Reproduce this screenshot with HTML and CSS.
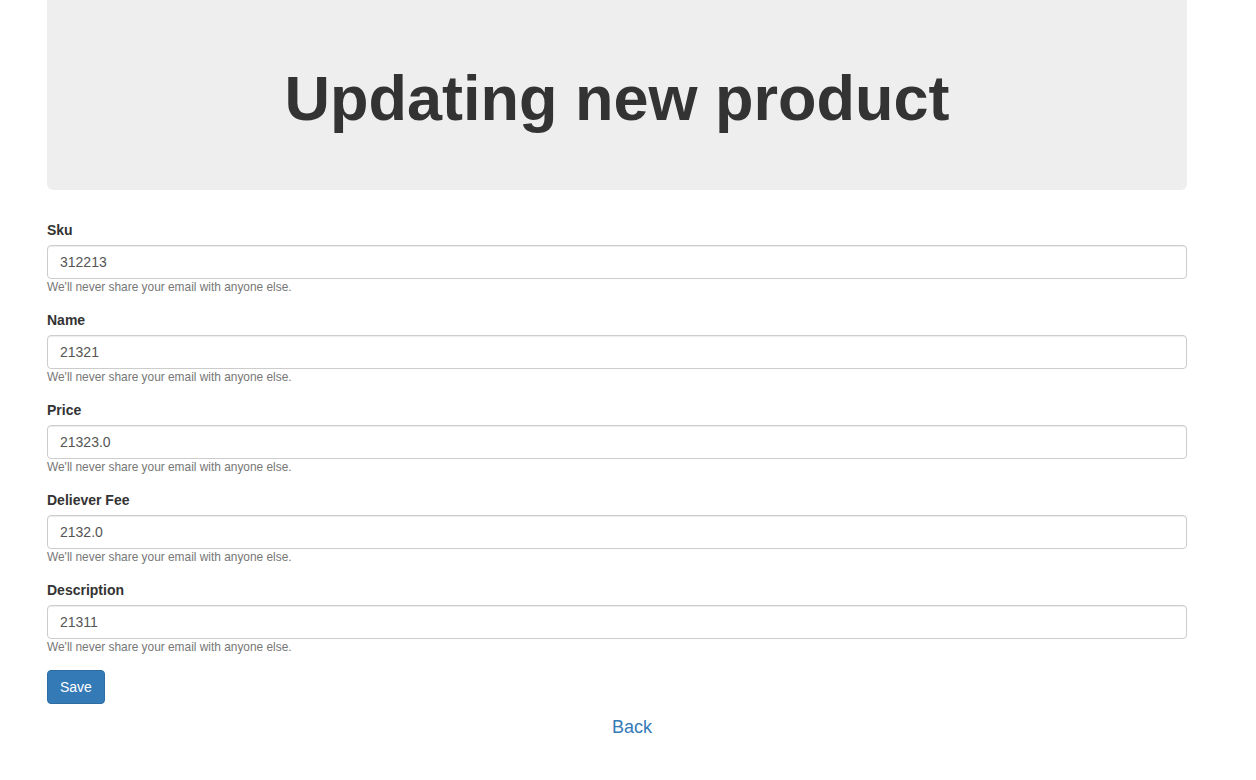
FILE: index.html
```html
<!DOCTYPE html>
<html lang="en">
<head>
<meta charset="utf-8">
<title>Updating new product</title>
<link rel="stylesheet" href="styles.css">
</head>
<body>
<div class="page">
  <div class="jumbotron">
    <h1>Updating new product</h1>
  </div>
  <form class="product-form">
    <div class="form-group">
      <label for="sku">Sku</label>
      <input id="sku" class="form-control" type="text" value="312213">
      <small class="help">We'll never share your email with anyone else.</small>
    </div>
    <div class="form-group">
      <label for="name">Name</label>
      <input id="name" class="form-control" type="text" value="21321">
      <small class="help">We'll never share your email with anyone else.</small>
    </div>
    <div class="form-group">
      <label for="price">Price</label>
      <input id="price" class="form-control" type="text" value="21323.0">
      <small class="help">We'll never share your email with anyone else.</small>
    </div>
    <div class="form-group">
      <label for="fee">Deliever Fee</label>
      <input id="fee" class="form-control" type="text" value="2132.0">
      <small class="help">We'll never share your email with anyone else.</small>
    </div>
    <div class="form-group">
      <label for="desc">Description</label>
      <input id="desc" class="form-control" type="text" value="21311">
      <small class="help">We'll never share your email with anyone else.</small>
    </div>
    <button type="button" class="btn-primary">Save</button>
  </form>
  <div class="back-row"><a href="#" class="back-link">Back</a></div>
</div>
</body>
</html>
```
FILE: styles.css
```css
html, body {
  margin: 0;
  padding: 0;
  background: #fff;
}
body {
  font-family: "Liberation Sans", Arial, Helvetica, sans-serif;
  font-size: 14px;
  line-height: 1.42857143;
  color: #333;
}
* { box-sizing: border-box; }

.page {
  width: 1140px;
  margin-left: 47px;
}

.jumbotron {
  background: #eee;
  border-radius: 0 0 6px 6px;
  padding: 64px 0 57px;
  margin-bottom: 30px;
  text-align: center;
}
.jumbotron h1 {
  margin: 0;
  font-size: 63px;
  line-height: 1.1;
  font-weight: bold;
  color: #333;
}

.product-form {
  margin: 0;
}
.form-group {
  margin-bottom: 15px;
}
.form-group label {
  display: inline-block;
  margin-bottom: 5px;
  font-weight: bold;
  line-height: 20px;
}
.form-control {
  display: block;
  width: 100%;
  height: 34px;
  padding: 6px 12px;
  font-family: inherit;
  font-size: 14px;
  line-height: 20px;
  color: #555;
  background: #fff;
  border: 1px solid #ccc;
  border-radius: 4px;
  box-shadow: inset 0 1px 1px rgba(0, 0, 0, .075);
  margin: 0;
}
.help {
  display: block;
  font-size: 11.9px;
  line-height: 16px;
  color: #777;
}

.btn-primary {
  display: inline-block;
  height: 34px;
  padding: 6px 12px;
  font-family: inherit;
  font-size: 14px;
  line-height: 20px;
  color: #fff;
  background: #337ab7;
  border: 1px solid #2e6da4;
  border-radius: 4px;
  cursor: pointer;
  margin: 0;
}

.back-row {
  margin-top: 11px;
  padding-left: 30px;
  text-align: center;
  font-size: 18px;
}
.back-link {
  color: #337ab7;
  text-decoration: none;
}
```
